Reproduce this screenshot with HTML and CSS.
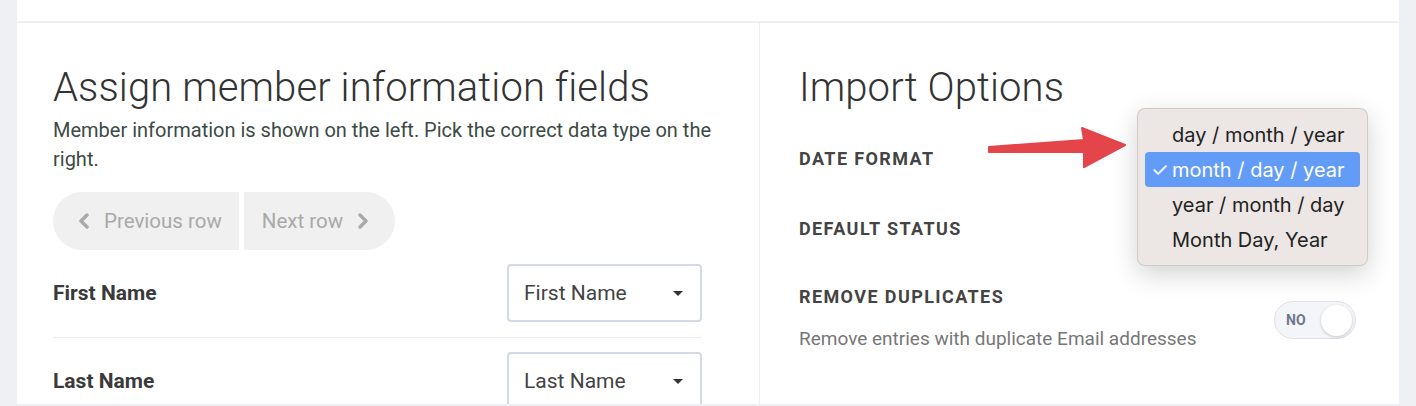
FILE: index.html
```html
<!DOCTYPE html>
<html lang="en">
<head>
  <meta charset="UTF-8">
  <title>Import members</title>
  <link rel="stylesheet" href="styles.css">
</head>
<body>

<div class="page">
  <div class="top-card"></div>

  <div class="import-card">
    <!-- mapping of member fields -->
    <section class="col fields">
      <h1>Assign member information fields</h1>
      <p class="lead">Member information is shown on the left. Pick the correct data type on the right.</p>

      <div class="row-nav">
        <button class="nav-btn prev">
          <svg width="12" height="16" viewBox="0 0 12 16"><polyline points="9,2 3,8 9,14" fill="none" stroke="#a9a9a9" stroke-width="3.4" stroke-linecap="round" stroke-linejoin="round"/></svg>
          Previous row
        </button>
        <button class="nav-btn next">
          Next row
          <svg width="12" height="16" viewBox="0 0 12 16"><polyline points="3,2 9,8 3,14" fill="none" stroke="#a9a9a9" stroke-width="3.4" stroke-linecap="round" stroke-linejoin="round"/></svg>
        </button>
      </div>

      <div class="field-row">
        <span class="field-name">First Name</span>
        <div class="pick">First Name <span class="caret"></span></div>
      </div>
      <div class="field-row">
        <span class="field-name">Last Name</span>
        <div class="pick">Last Name <span class="caret"></span></div>
      </div>
    </section>

    <!-- import options -->
    <section class="col options">
      <h1>Import Options</h1>

      <div class="opt-row">
        <span class="opt-label">Date Format</span>
      </div>
      <div class="opt-row">
        <span class="opt-label">Default Status</span>
      </div>
      <div class="opt-row dupes">
        <div>
          <div class="opt-label">Remove Duplicates</div>
          <div class="opt-help">Remove entries with duplicate Email addresses</div>
        </div>
        <div class="toggle"><span>NO</span><span class="knob"></span></div>
      </div>

      <svg class="arrow" width="142" height="44" viewBox="0 0 142 44">
        <polygon points="2,21 97,14 95,2 138,19 97,41 97,26 2,26" fill="#e4454a" stroke="#e4454a" stroke-width="2" stroke-linejoin="round"/>
      </svg>

      <ul class="menu">
        <li>day / month / year</li>
        <li class="on"><span class="tick">✓</span>month / day / year</li>
        <li>year / month / day</li>
        <li>Month Day, Year</li>
      </ul>
    </section>
  </div>
</div>

</body>
</html>
```

FILE: styles.css
```css
* { box-sizing: border-box; }
body {
  margin: 0;
  background: #eef0f4;
  font-family: Roboto, 'Liberation Sans', sans-serif;
  color: #333;
  height: 406px;
  overflow: hidden;
}
.page {
  margin: 0 17px;
}
.top-card {
  height: 21px;
  background: #fff;
}
.import-card {
  display: grid;
  grid-template-columns: 743px 1fr;
  height: 383px;
  background: #fff;
  border-top: 2px solid #eff0f2;
  overflow: hidden;
}
.col {
  position: relative;
  padding-top: 41px;
}
.fields {
  padding-left: 36px;
  padding-right: 57px;
  border-right: 1px solid #eceef1;
}
.options {
  padding-left: 39px;
  padding-right: 42px;
}
h1 {
  margin: 0;
  font-size: 40px;
  font-weight: 300;
  line-height: 48px;
  color: #333;
  letter-spacing: 0.1px;
}
.lead {
  margin: 4px -10px 0 0;
  font-size: 20px;
  line-height: 29px;
  color: #3c4a46;
}
.row-nav {
  display: flex;
  gap: 5px;
  margin-top: 18px;
}
.nav-btn {
  display: flex;
  align-items: center;
  gap: 14px;
  height: 58px;
  border: none;
  background: #f0f0f0;
  color: #a9a9a9;
  font-family: inherit;
  font-size: 20.5px;
}
.nav-btn.prev {
  padding: 0 17px 0 25px;
  border-radius: 29px 0 0 29px;
}
.nav-btn.next {
  padding: 0 26px 0 18px;
  border-radius: 0 29px 29px 0;
}
.field-row {
  display: flex;
  align-items: center;
  justify-content: space-between;
  padding: 14px 0 15px;
  border-bottom: 1px solid #eceef0;
}
.field-row:first-of-type { margin-top: 14px; }
.field-name {
  font-size: 21px;
  font-weight: bold;
  color: #3a3a3a;
}
.pick {
  display: flex;
  align-items: center;
  justify-content: space-between;
  width: 195px;
  height: 58px;
  padding: 0 17px 0 15px;
  border: 2px solid #d5d8e8;
  border-radius: 4px;
  font-size: 21px;
  color: #444;
}
.caret {
  width: 0;
  height: 0;
  border-left: 5px solid transparent;
  border-right: 5px solid transparent;
  border-top: 5px solid #333;
}
.opt-row {
  display: flex;
  align-items: center;
  justify-content: space-between;
  height: 70px;
}
.opt-row:first-of-type { margin-top: 11px; }
.opt-label {
  font-size: 18px;
  font-weight: bold;
  letter-spacing: 1.4px;
  text-transform: uppercase;
  color: #444;
}
.dupes {
  align-items: flex-start;
  padding-top: 23px;
  height: auto;
}
.opt-help {
  margin-top: 20px;
  font-size: 19px;
  color: #777;
}
.toggle {
  display: flex;
  align-items: center;
  justify-content: space-between;
  width: 82px;
  height: 38px;
  margin-top: 15px;
  margin-right: 1px;
  padding: 0 3px 0 11px;
  border: 1px solid #dfe1e5;
  border-radius: 19px;
  background: #f4f5f8;
  font-size: 14px;
  font-weight: bold;
  color: #6b7a8a;
}
.knob {
  width: 31px;
  height: 31px;
  border-radius: 50%;
  background: #fff;
  box-shadow: 0 1px 3px rgba(0, 0, 0, 0.2);
}
.arrow {
  position: absolute;
  left: 227px;
  top: 103px;
}
.menu {
  position: absolute;
  left: 377px;
  top: 85px;
  width: 231px;
  margin: 0;
  padding: 8px 7px;
  list-style: none;
  background: #ece7e4;
  border: 1px solid rgba(0, 0, 0, 0.12);
  border-radius: 8px;
  box-shadow: 0 8px 26px rgba(0, 0, 0, 0.18);
  font-family: Inter, 'Noto Sans', sans-serif;
  font-size: 20px;
  color: #222;
}
.menu li {
  display: flex;
  align-items: center;
  height: 35px;
  padding-left: 27px;
  border-radius: 4px;
}
.menu li.on {
  padding-left: 6px;
  background: #629cf6;
  color: #fff;
}
.tick {
  width: 21px;
}
```
